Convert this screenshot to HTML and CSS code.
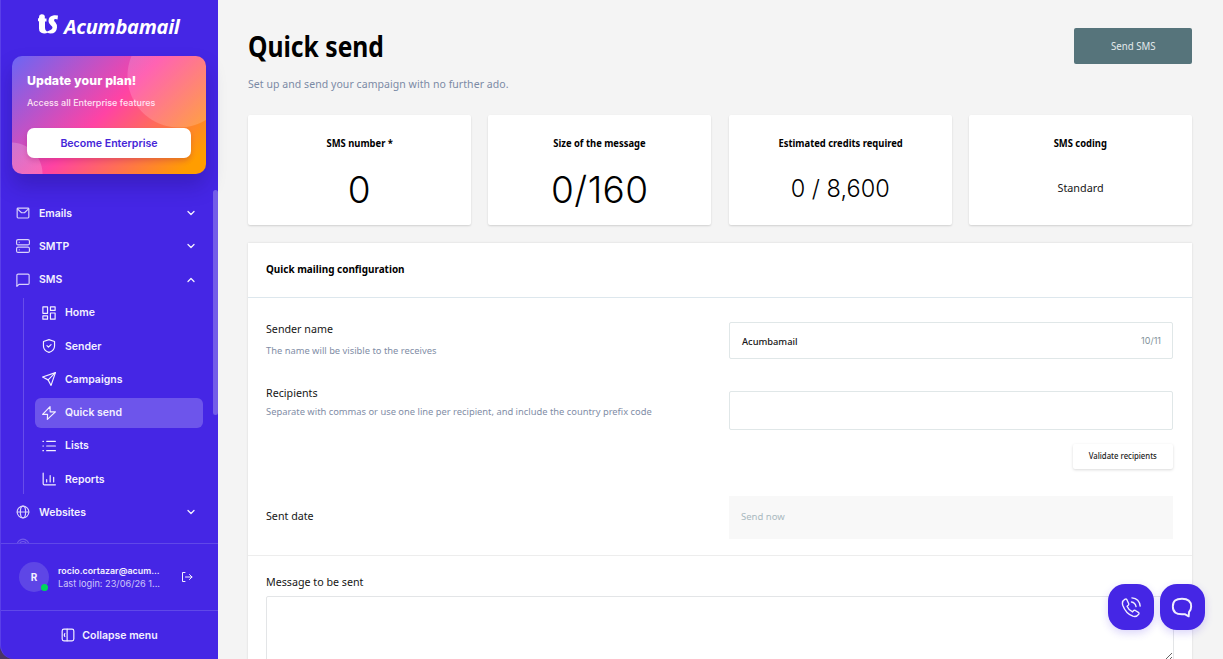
FILE: index.html
```
<!DOCTYPE html>
<html lang="en">
<head>
  <meta charset="utf-8">
  <title>Quick send - Acumbamail</title>
  <link rel="stylesheet" href="styles.css">
</head>
<body>
  <div class="app">
    <aside class="sidebar">
      <div class="logo">
        <svg class="logo-mark" viewBox="0 0 20 20"><path d="M1 3Q1 .5 3.500 .2Q6.500 0 6.800 2V4.500H8.500V7.500H7V14Q7 16.500 9 17.500Q11 16.800 12.500 16Q14.500 15 14.500 13.500Q14.500 12.500 12.800 11.300Q10.500 9.500 10.500 7Q10.500 2 16 1.200Q18 1 20 1.500L19.500 5.500Q16.500 4.500 16 6Q16 7.300 17.500 8.500Q19.300 10.500 19 13.500Q18.500 19.500 12.500 19.500Q11 19.500 9.500 18.800Q8 19.700 6 19.500Q1 19 1 14.500V7.500L0 7V4.500L1 4Z"/></svg>
        <span class="logo-text">Acumbamail</span>
      </div>

      <div class="plan">
        <div class="plan-title">Update your plan!</div>
        <div class="plan-text">Access all Enterprise features</div>
        <button class="plan-btn">Become Enterprise</button>
      </div>

      <nav class="nav">
        <a class="item">
          <svg class="icon" viewBox="0 0 24 24"><rect x="2" y="3.500" width="20" height="17" rx="1.500"/><path d="M2.500 5l7 6.500h5L21.500 5"/></svg>
          <span>Emails</span>
          <svg class="chev" viewBox="0 0 24 24"><path d="M6 9l6 6 6-6"/></svg>
        </a>
        <a class="item">
          <svg class="icon" viewBox="0 0 24 24"><rect x="1" y="1" width="22" height="9" rx="2.500"/><rect x="1" y="14" width="22" height="9" rx="2.500"/><path d="M5.500 5.500h.1M5.500 18.500h.1"/></svg>
          <span>SMTP</span>
          <svg class="chev" viewBox="0 0 24 24"><path d="M6 9l6 6 6-6"/></svg>
        </a>
        <a class="item">
          <svg class="icon" viewBox="0 0 24 24"><path d="M1.500 23V4a2 2 0 0 1 2-2h17a2 2 0 0 1 2 2v13.500a2 2 0 0 1-2 2H5z"/></svg>
          <span>SMS</span>
          <svg class="chev" viewBox="0 0 24 24"><path d="M6 15l6-6 6 6"/></svg>
        </a>
        <div class="sub">
          <a class="item">
            <svg class="icon" viewBox="0 0 24 24"><rect x="1.500" y="1.500" width="8" height="11"/><rect x="14.500" y="1.500" width="8" height="6"/><rect x="14.500" y="12" width="8" height="10.500"/><rect x="1.500" y="17" width="8" height="5.500"/></svg>
            <span>Home</span>
          </a>
          <a class="item">
            <svg class="icon" viewBox="0 0 24 24"><path d="M12 1l9.500 3.300v7.500c0 5.700-3.700 9-9.500 11.200-5.800-2.200-9.500-5.500-9.500-11.200V4.300z"/><path d="M8.500 11.500l2.500 2.500 4.500-4.500"/></svg>
            <span>Sender</span>
          </a>
          <a class="item">
            <svg class="icon" viewBox="0 0 24 24"><path d="M23 1L15.500 23l-5-9.500L1 8.500z"/><path d="M23 1L10.500 13.500"/></svg>
            <span>Campaigns</span>
          </a>
          <a class="item active">
            <svg class="icon" viewBox="0 0 24 24"><path d="M13.800 1L1 14.300h8.500L9.200 23l13.800-13h-9z"/></svg>
            <span>Quick send</span>
          </a>
          <a class="item">
            <svg class="icon" viewBox="0 0 24 24"><path d="M8 4h15M8 12h15M8 20h15M1.500 4h1M1.500 12h1M1.500 20h1"/></svg>
            <span>Lists</span>
          </a>
          <a class="item">
            <svg class="icon" viewBox="0 0 24 24"><path d="M2 2v18q0 2 2 2h19M8 17v-4M14 17V6M20 17V9"/></svg>
            <span>Reports</span>
          </a>
        </div>
        <a class="item">
          <svg class="icon" viewBox="0 0 24 24"><circle cx="12" cy="12" r="10"/><ellipse cx="12" cy="12" rx="4.500" ry="10"/><path d="M2 12h20"/></svg>
          <span>Websites</span>
          <svg class="chev" viewBox="0 0 24 24"><path d="M6 9l6 6 6-6"/></svg>
        </a>
        <a class="item faded">
          <svg class="icon" viewBox="0 0 24 24"><circle cx="12" cy="12" r="10"/><circle cx="12" cy="12" r="6"/></svg>
        </a>
        <div class="scrollbar"></div>
      </nav>

      <div class="user">
        <div class="avatar">R<span class="online"></span></div>
        <div class="user-info">
          <div class="user-mail">rocio.cortazar@acum...</div>
          <div class="user-login">Last login: 23/06/26 1...</div>
        </div>
        <svg class="logout" viewBox="0 0 24 24"><path d="M8 3H3v18h5M9 12h13M17 7l5 5-5 5"/></svg>
      </div>

      <div class="collapse">
        <svg class="icon" viewBox="0 0 24 24"><rect x="2" y="2" width="20" height="20" rx="3"/><path d="M10.500 2v20M6.500 9.500L5.500 12l1 2.500"/></svg>
        <span>Collapse menu</span>
      </div>
    </aside>

    <main class="main">
      <header class="header">
        <div>
          <h1><span class="narrow">Quick send</span></h1>
          <p class="subtitle">Set up and send your campaign with no further ado.</p>
        </div>
        <button class="send-btn"><span class="narrow center">Send SMS</span></button>
      </header>

      <section class="stats">
        <div class="stat">
          <h2><span class="narrow center">SMS number *</span></h2>
          <div class="value big">0</div>
        </div>
        <div class="stat">
          <h2><span class="narrow center">Size of the message</span></h2>
          <div class="value big">0/160</div>
        </div>
        <div class="stat">
          <h2><span class="narrow center">Estimated credits required</span></h2>
          <div class="value medium">0 / 8,600</div>
        </div>
        <div class="stat">
          <h2><span class="narrow center">SMS coding</span></h2>
          <div class="value small">Standard</div>
        </div>
      </section>

      <section class="panel">
        <div class="panel-head"><span class="narrow">Quick mailing configuration</span></div>
        <div class="panel-body">
          <div class="row row-sender">
            <div>
              <label>Sender name</label>
              <p class="hint">The name will be visible to the receives</p>
            </div>
            <div class="field">
              <span class="field-value">Acumbamail</span>
              <span class="counter">10/11</span>
            </div>
          </div>
          <div class="row row-recipients">
            <div>
              <label>Recipients</label>
              <p class="hint">Separate with commas or use one line per recipient, and include the country prefix code</p>
            </div>
            <div class="recipients">
              <div class="field tall"></div>
              <button class="validate"><span class="narrow center">Validate recipients</span></button>
            </div>
          </div>
          <div class="row row-date">
            <label>Sent date</label>
            <div class="date">Send now</div>
          </div>
        </div>
        <div class="message">
          <label>Message to be sent</label>
          <textarea class="message-box"></textarea>
        </div>
      </section>
    </main>
  </div>

  <div class="floating">
    <button class="bubble">
      <svg viewBox="0 0 24 24"><path d="M5.500 3.500C3 5 2 7 3 10c2 5.500 6 10 11 12 3 1 5 0 6.500-2.200.4-.8.200-1.500-.5-2l-3.300-2c-.8-.4-1.500-.3-2 .3l-1 1.300c-2.700-1.200-4.800-3.400-6-6.300l1.300-1c.6-.5.7-1.200.4-2L7.500 4c-.5-.8-1.200-1-2-.5z"/><path d="M12.500 6.500c2.700.5 4.500 2.400 5 5M13 2C18 2.500 21.500 6 22 11"/></svg>
    </button>
    <button class="bubble">
      <svg class="bold" viewBox="0 0 24 24"><path d="M12 3c6.800 0 10 2.500 10 8.500 0 3-.8 4.600-2.300 6l-.4 4.700-4.300-2.400c-1 .2-1.900.2-3 .2-6.800 0-10-2.500-10-8.500S5.200 3 12 3z"/></svg>
    </button>
  </div>
</body>
</html>
```
FILE: styles.css
```
* {
  box-sizing: border-box;
}

body {
  margin: 0;
  background: #f4f4f4;
  color: #161616;
  font-family: "Noto Sans", sans-serif;
  overflow: hidden;
}

button {
  border: none;
  font-family: inherit;
  padding: 0;
}

h1, h2, p {
  margin: 0;
}

svg {
  fill: none;
  stroke: currentColor;
  stroke-width: 2;
  stroke-linecap: round;
  stroke-linejoin: round;
  flex: none;
}

/* condensed look for headings and buttons */
.narrow {
  display: inline-block;
  transform: scaleX(.88);
  transform-origin: left;
}

.narrow.center {
  transform-origin: center;
}

.app {
  display: flex;
  height: 659px;
  background: #f4f4f4;
}

/* Sidebar */
.sidebar {
  width: 218px;
  display: flex;
  flex-direction: column;
  background: #4526e5;
  color: #f3f0ff;
  font-family: Inter, sans-serif;
  border-left: 1px solid #5a3fe9;
  border-radius: 0 0 0 14px;
  box-shadow: -14px 14px 0 #4b3566;
}

.logo {
  height: 56px;
  padding: 14px 0 0 37px;
  display: flex;
  gap: 6px;
}

.logo-mark {
  width: 20px;
  height: 20px;
  fill: #fff;
  stroke: none;
}

.logo-text {
  font: italic 700 20px/25px "Open Sans", sans-serif;
  letter-spacing: -0.250px;
  color: #fff;
}

.plan {
  width: 194px;
  height: 118px;
  margin-left: 11px;
  padding: 17px 15px 0;
  border-radius: 10px;
  background:
    radial-gradient(circle at 167px 20px, rgba(255, 255, 255, .17) 51px, transparent 52px),
    radial-gradient(circle at -1px 118px, rgba(255, 255, 255, .2) 31px, transparent 32px),
    linear-gradient(135deg, #6a66f5 0%, #ff43a4 48%, #ff9d00 92%);
  box-shadow: 0 12px 20px rgba(30, 10, 100, .28);
}

.plan-title {
  font-size: 12.300px;
  line-height: 15px;
  font-weight: 800;
  letter-spacing: .080px;
  color: #fff;
}

.plan-text {
  margin-top: 8px;
  font-size: 9px;
  line-height: 14px;
  font-weight: 500;
  color: #ffe3f3;
}

.plan-btn {
  display: block;
  width: 164px;
  height: 30px;
  margin-top: 18px;
  border-radius: 7px;
  background: #fff;
  color: #4526d8;
  font-size: 10.600px;
  font-weight: 600;
  box-shadow: 0 3px 5px rgba(120, 0, 80, .2);
}

.nav {
  position: relative;
  height: 353px;
  margin-top: 16px;
  padding: 8px 15px 0 15px;
  overflow: hidden;
}

.item {
  display: flex;
  align-items: center;
  height: 30px;
  margin-bottom: 3.250px;
  font-size: 10.500px;
  font-weight: 600;
}

.item .icon {
  width: 14px;
  height: 14px;
  margin-right: 9px;
}

.item > .icon {
  opacity: .85;
}

.chev {
  width: 12px;
  height: 12px;
  margin-left: auto;
  margin-right: 6px;
  stroke-width: 2.600;
}

.sub {
  margin-left: 7px;
  border-left: 1px solid #684dea;
  padding-left: 11px;
  margin-bottom: 3px;
}

.sub .item {
  padding-left: 7px;
}

.sub .item > .icon {
  opacity: 1;
}

.sub .item:last-child {
  margin-bottom: 0;
}

.item.active {
  width: 168px;
  border-radius: 6px;
  background: #6d55eb;
}

.faded {
  opacity: .3;
}

.scrollbar {
  position: absolute;
  top: 0;
  right: 0;
  width: 5px;
  height: 225px;
  border-radius: 3px;
  background: #735ce9;
}

.user {
  display: flex;
  align-items: center;
  height: 68px;
  padding-left: 18px;
  border-top: 1px solid #6048e8;
  border-bottom: 1px solid #6048e8;
}

.avatar {
  position: relative;
  width: 30px;
  height: 30px;
  border-radius: 50%;
  background: #5e46e6;
  font-size: 10px;
  line-height: 30px;
  font-weight: 700;
  text-align: center;
}

.online {
  position: absolute;
  right: 1px;
  bottom: 1px;
  width: 7px;
  height: 7px;
  border-radius: 50%;
  background: #00d65b;
}

.user-info {
  width: 114px;
  margin-left: 9px;
  line-height: 13px;
  white-space: nowrap;
}

.user-mail {
  font-size: 8.900px;
  font-weight: 600;
}

.user-login {
  font-size: 9.200px;
  color: #cfc6fa;
}

.logout {
  width: 12px;
  height: 12px;
  margin-left: 9px;
}

.collapse {
  flex: 1;
  display: flex;
  align-items: center;
  justify-content: center;
  gap: 7px;
  font-size: 10.500px;
  font-weight: 600;
}

.collapse .icon {
  width: 14px;
  height: 14px;
}

/* Main content */
.main {
  width: 974px;
  padding: 28px 0 0 30px;
}

.header {
  display: flex;
  justify-content: space-between;
  height: 87px;
}

h1 {
  color: #000;
  font-size: 28px;
  line-height: 36px;
  font-weight: 700;
}

.subtitle {
  margin-top: 12px;
  color: #7b8aa5;
  font-size: 10.500px;
  line-height: 16px;
  letter-spacing: .060px;
}

.send-btn {
  width: 118px;
  height: 36px;
  border-radius: 2px;
  background: #56747b;
  color: #e3eaeb;
  font-size: 11px;
  padding-bottom: 2px;
}

.stats {
  display: grid;
  grid-template-columns: repeat(4, 1fr);
  gap: 17.500px;
}

.stat {
  height: 110px;
  padding-top: 20px;
  border-radius: 2px;
  background: #fff;
  text-align: center;
  box-shadow: 0 1px 2px rgba(0, 0, 0, .15);
}

.stat h2,
.panel-head {
  color: #000;
  font-size: 10.700px;
  line-height: 16px;
  font-weight: 700;
}

.value {
  height: 74px;
  line-height: 74px;
}

.big,
.medium {
  color: #000;
  font-family: Inter, sans-serif;
  font-weight: 300;
}

.big {
  font-size: 37px;
  line-height: 77px;
  letter-spacing: .400px;
}

.medium {
  font-size: 23.500px;
  line-height: 76px;
}

.small {
  font-size: 10.800px;
}

.panel {
  height: 430px;
  margin-top: 18px;
  background: #fff;
  box-shadow: 0 0 2px rgba(0, 0, 0, .12);
}

.panel-head {
  height: 55px;
  padding: 18px 18px 0;
  border-bottom: 1px solid #dde7ed;
  font-size: 11.300px;
}

.panel-body {
  height: 258px;
  border-bottom: 1px solid #ededed;
}

.row {
  display: grid;
  grid-template-columns: 463px 444px;
  padding-left: 18px;
}

.row-sender {
  padding-top: 24px;
  height: 93px;
}

.row-recipients {
  height: 105px;
}

label {
  display: block;
  font-size: 10.700px;
  line-height: 16px;
}

.row-sender label {
  margin-top: -1px;
}

.hint {
  margin-top: 7px;
  color: #7f8da6;
  font-size: 9.350px;
  line-height: 14px;
}

.row-recipients label {
  margin-top: -6px;
}

.row-recipients .hint {
  margin-top: 4px;
}

.field {
  display: flex;
  align-items: center;
  justify-content: space-between;
  height: 37px;
  padding: 0 11px 0 12px;
  border: 1px solid #e0e7e8;
  border-radius: 2px;
  font-size: 9.500px;
}

.field.tall {
  height: 39px;
}

.field-value {
  padding-top: 2px;
  font-size: 9.300px;
  font-weight: 500;
}

.counter {
  color: #81929a;
  font-family: Inter, sans-serif;
  font-size: 9px;
}

.validate {
  display: block;
  width: 100px;
  height: 25px;
  margin: 14px 0 0 auto;
  border-radius: 2px;
  background: #fff;
  color: #222;
  font-size: 8.800px;
  font-weight: 500;
  padding-bottom: 2px;
  box-shadow: 0 1px 3px rgba(0, 0, 0, .15);
}

.row-date label {
  margin-top: 12px;
}

.date {
  height: 43px;
  padding-left: 12px;
  background: #f8f8f8;
  color: #a9b8bf;
  font-size: 9.500px;
  line-height: 42px;
}

.message {
  padding: 18px 18px 0;
}

.message-box {
  display: block;
  width: 908px;
  height: 66px;
  margin-top: 6px;
  border: 1px solid #e3e5e7;
  border-radius: 2px;
  outline: none;
}

/* Floating contact buttons */
.floating {
  position: fixed;
  top: 584px;
  right: 18px;
  display: flex;
  gap: 6px;
}

.bubble {
  display: flex;
  align-items: center;
  justify-content: center;
  width: 45.500px;
  height: 46px;
  border-radius: 17px;
  background: #4526e5;
  color: #f0edff;
  box-shadow: 0 3px 8px rgba(69, 38, 229, .2);
}

.bubble svg {
  width: 22px;
  height: 22px;
  stroke-width: 1.500;
}

.bubble .bold {
  stroke-width: 2.100;
}
```
